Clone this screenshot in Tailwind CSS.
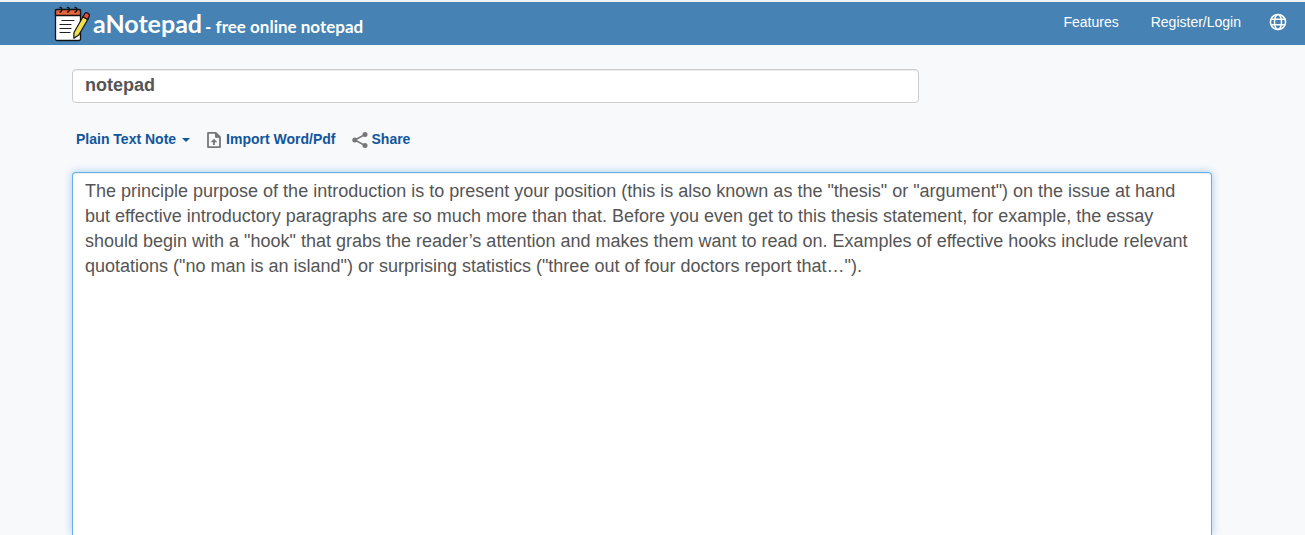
<!doctype html>
<html lang="en">
<head>
	<title>aNotepad - free online notepad</title>
	<meta charset="UTF-8">
	<meta content="width=device-width, initial-scale=1.0" name="viewport">
	<script src="https://cdn.jsdelivr.net/npm/@tailwindcss/browser@4"></script>
</head>

<body class="flex h-screen flex-col overflow-hidden bg-[#f8f9fb] font-['Liberation_Sans',Arial,sans-serif] text-[#555]">

<!-- Navbar -->
<header class="flex h-[45px] shrink-0 items-center justify-between border-t-2 border-[#eff1f3] bg-[#4682b4] pr-[18px] pl-[54px] text-white">
	<a class="flex items-center gap-[3px] font-['Lato',sans-serif] font-bold" href="#">
		<svg class="h-9 w-9" viewBox="0 0 36 36" fill="none" stroke-linecap="round" stroke-linejoin="round" aria-hidden="true">
			<path d="M1.500 4h25v29a1.500 1.500 0 0 1-1.500 1.500H3A1.500 1.500 0 0 1 1.500 33z" fill="#fff" stroke="#111" stroke-width="1.300"/>
			<path d="M1.500 9.500V5A1.500 1.500 0 0 1 3 3.500h22A1.500 1.500 0 0 1 26.500 5v4.500z" fill="#e8643c" stroke="#111" stroke-width="1.300"/>
			<path d="M6 6c2.500 0 2.500-5 0-4.500M13.500 6c2.500 0 2.500-5 0-4.500M21 6c2.500 0 2.500-5 0-4.500" stroke="#111" stroke-width="1.300"/>
			<path d="M8 14.500h12M6 18.500h11M6 22.500h11M6 26.500h10" stroke="#222" stroke-width="1.200"/>
			<path d="m20 26.500 9-15.800 4.800 2.800-9 15.500-5 3.200z" fill="#efe04c" stroke="#111" stroke-width="1.200"/>
			<path d="m29 10.700 2-3.400c1-1.700 5.200.7 4.300 2.500l-1.500 3.700z" fill="#f0483c" stroke="#111" stroke-width="1.200"/>
		</svg>
		<span class="pt-0.5 text-[25px] leading-9">aNotepad <span class="-ml-[3px] text-[17px]">- free online notepad</span></span>
	</a>
	<nav class="flex items-center gap-8 pb-0.5 text-[14px]">
		<a href="#">Features</a>
		<a href="#">Register/Login</a>
		<button class="-ml-1 pb-0.5" type="button" aria-label="Language">
			<svg class="h-[18px] w-[18px]" viewBox="0 0 18 18" fill="none" stroke="#fff" stroke-width="1.500" aria-hidden="true">
				<circle cx="9" cy="9" r="7.600"/>
				<ellipse cx="9" cy="9" rx="3.500" ry="7.600"/>
				<path d="M1.800 6.300h14.400M1.800 11.700h14.400"/>
			</svg>
		</button>
	</nav>
</header>

<main class="flex min-h-0 flex-1 flex-col pt-6 pr-[93px] pl-[72px]">
	<input class="h-[34px] w-[847px] max-w-full shrink-0 rounded-[4px] border border-[#ccc] bg-white px-3 pb-0.5 text-[18px] font-bold shadow-[inset_0_1px_1px_rgba(0,0,0,0.075)] outline-none" type="text" aria-label="Note title" value="notepad">

	<!-- Note tools -->
	<div class="flex h-[69px] shrink-0 items-center gap-4 px-1 pt-1 text-[14px] font-bold text-[#11559c]">
		<button class="flex items-center gap-1.5" type="button">
			Plain Text Note
			<svg class="h-1 w-2" viewBox="0 0 8 4" fill="currentColor" aria-hidden="true"><path d="M0 0h8L4 4z"/></svg>
		</button>
		<button class="flex items-center gap-1" type="button">
			<svg class="h-4 w-4" viewBox="0 0 16 16" fill="none" stroke="#777" stroke-width="1.800" aria-hidden="true">
				<path d="M2 .9h7.800l4.200 4.200v10H2z" stroke-linejoin="round"/>
				<path d="M9.500 1v4.300H14z" fill="#777" stroke-width="1"/>
				<path d="M8 13V9.500"/>
				<path d="M4.600 10.300 8 6.700l3.400 3.600z" fill="#777" stroke="none"/>
			</svg>
			Import Word/Pdf
		</button>
		<button class="flex items-center gap-1" type="button">
			<svg class="h-4 w-4" viewBox="0 0 16 16" fill="#777" aria-hidden="true">
				<path d="M13 2.500 2.800 8 13 13.500" fill="none" stroke="#777" stroke-width="1.500"/>
				<circle cx="13" cy="2.500" r="2.500"/>
				<circle cx="2.800" cy="8" r="2.500"/>
				<circle cx="13" cy="13.500" r="2.500"/>
			</svg>
			Share
		</button>
	</div>

	<textarea class="min-h-0 w-full flex-1 resize-none rounded-t-[4px] border border-b-0 border-[#66afe9] bg-white px-3 py-1.5 text-[18px] leading-[25px] shadow-[inset_0_1px_1px_rgba(0,0,0,0.075),0_0_8px_rgba(102,175,233,0.6)] outline-none" aria-label="Note text">The principle purpose of the introduction is to present your position (this is also known as the "thesis" or "argument") on the issue at hand but effective introductory paragraphs are so much more than that. Before you even get to this thesis statement, for example, the essay should begin with a "hook" that grabs the reader’s attention and makes them want to read on. Examples of effective hooks include relevant quotations ("no man is an island") or surprising statistics ("three out of four doctors report that…").</textarea>
</main>

</body>
</html>
